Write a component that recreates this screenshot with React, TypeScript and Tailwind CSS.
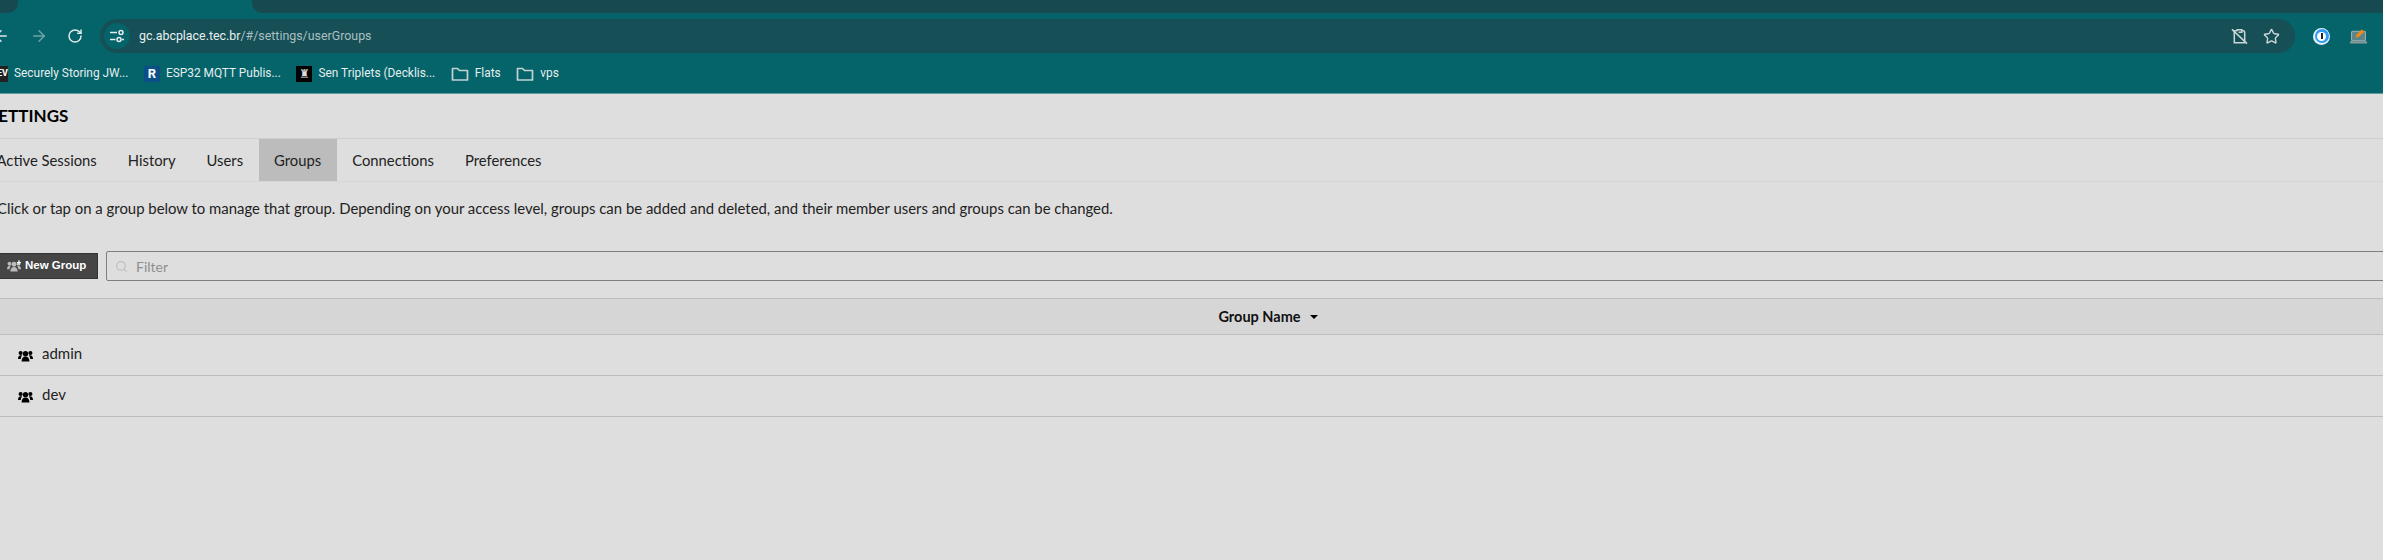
import { ArrowLeft, ArrowRight, RotateCw, Star, Search } from "lucide-react";

function GroupsIcon({ className, plus }: { className?: string; plus?: boolean }) {
  return (
    <svg viewBox="0 0 16 13" className={className} fill="currentColor" aria-hidden="true">
      <circle cx="8" cy="4.500" r="2.800" />
      <circle cx="2.800" cy="3.800" r="2.200" />
      <circle cx="13.200" cy="3.800" r="2.200" />
      <path d="M3.800 12.800c0-3.300 1.600-5.300 4.200-5.300s4.200 2 4.200 5.300z" />
      <path d="M0 10.200c0-2.500 1.200-3.900 3-3.900.6 0 1 .1 1.400.3C3.500 7.600 3 8.800 3 10.200H0zM16 10.200c0-2.500-1.200-3.900-3-3.900-.6 0-1 .1-1.400.3.900 1 1.400 2.200 1.400 3.600H16z" />
      {plus ? <path d="M13 0h1.400v1.800H16v1.300h-1.600V5H13V3.100h-1.700V1.800H13z" fill="#fff" /> : null}
    </svg>
  );
}

function TuneIcon() {
  return (
    <svg viewBox="0 0 16 16" className="w-[16px] h-[16px]" fill="none" stroke="currentColor" strokeWidth="1.500" aria-hidden="true">
      <path d="M1 4.500h7M1 11.500h5.500M13 11.500h2" />
      <circle cx="12" cy="4.500" r="2" />
      <circle cx="10" cy="11.500" r="2" />
    </svg>
  );
}

function ClipboardSlashIcon({ className }: { className?: string }) {
  return (
    <svg viewBox="0 0 18 18" className={className} fill="none" stroke="currentColor" strokeWidth="1.600" aria-hidden="true">
      <path d="M6 3H3.500v12.500h11V4.500a1.500 1.500 0 0 0-1.500-1.500h-1" />
      <path d="M6.500 3.500V1.800h5v2.700H8" />
      <path d="M1 1.500l16 15" />
    </svg>
  );
}

function FolderIcon() {
  return (
    <svg viewBox="0 0 18 16" className="w-[18px] h-[16px] text-[#c3d2d3]" fill="none" stroke="currentColor" strokeWidth="1.700" aria-hidden="true">
      <path d="M1.500 2.500h5l2 2h8v9.500h-15z" strokeLinejoin="round" />
    </svg>
  );
}

const tabs = ["Active Sessions", "History", "Users", "Groups", "Connections", "Preferences"];

function Bookmark({ icon, label }: { icon: React.ReactNode; label: string }) {
  return (
    <div className="flex items-center gap-[6px] text-[11.900px] text-[#e4eeee]">
      {icon}
      <span>{label}</span>
    </div>
  );
}

function BrowserBar() {
  return (
    <div className="bg-[#05636a] h-[94px] border-b border-[#5f9aa0] flex flex-col font-['Roboto',sans-serif]">
      {/* tab strip */}
      <div className="flex h-[13px]">
        <div className="w-[18px] bg-[#174a50] rounded-br-[10px]" />
        <div className="w-[234px]" />
        <div className="flex-1 bg-[#174a50] rounded-bl-[10px]" />
      </div>
      {/* toolbar */}
      <div className="flex items-center h-[34px] mt-[6px]">
        <div className="flex items-center w-[101px] text-[#dfe9ea] -ml-[8px]">
          <ArrowLeft size={18} strokeWidth={2} />
          <ArrowRight size={18} strokeWidth={2} className="ml-[20px] text-[#6fa3a7]" />
          <RotateCw size={16} strokeWidth={2.2} className="ml-[19px]" />
        </div>
        <div className="flex items-center flex-1 h-[34px] ml-[7px] rounded-full bg-[#174f56] pl-[4px] pr-[15px]">
          <div className="flex items-center justify-center w-[26px] h-[26px] rounded-full bg-[#05636a] text-[#e4eeee]">
            <TuneIcon />
          </div>
          <span className="ml-[9px] text-[12.400px] text-[#e8f0f0]">gc.abcplace.tec.br</span>
          <span className="text-[12.400px] text-[#a9c0c2]">/#/settings/userGroups</span>
          <div className="flex-1" />
          <ClipboardSlashIcon className="w-[17px] h-[17px] text-[#c9d6d7]" />
          <Star size={17} strokeWidth={2} className="ml-[15px] text-[#c9d6d7]" />
        </div>
        <div className="flex items-center w-[88px] pl-[18px]">
          <div className="flex items-center justify-center w-[17px] h-[17px] rounded-full bg-[#e8f2fa]">
            <div className="flex items-center justify-center w-[14px] h-[14px] rounded-full bg-[#2f9bf5]">
              <div className="flex items-center justify-center w-[9px] h-[9px] rounded-full bg-white">
                <div className="w-[2px] h-[6px] bg-[#222]" />
              </div>
            </div>
          </div>
          <svg viewBox="0 0 16 16" className="ml-[20px] w-[17px] h-[17px]" aria-hidden="true">
            <rect x="1.500" y="3" width="13" height="9" rx="1" fill="#5d8488" stroke="#9db3b5" />
            <rect x="0" y="12.500" width="16" height="2" rx="0.500" fill="#8a9a9c" />
            <path d="M5 9l1-2.500L11 1.500l2.500 2-5.500 5z" fill="#f28a14" />
          </svg>
        </div>
      </div>
      {/* bookmarks */}
      <div className="flex items-center h-[30px] mt-[6px] -ml-[3px] gap-[15.500px]">
        <Bookmark
          icon={<span className="flex items-center justify-center w-[11px] h-[16px] bg-[#222] text-[9px] font-bold text-white">EV</span>}
          label="Securely Storing JW..."
        />
        <Bookmark
          icon={<span className="flex items-center justify-center w-[16px] h-[16px] bg-[#0b4f88] text-[13px] font-bold text-white">R</span>}
          label="ESP32 MQTT Publis..."
        />
        <Bookmark
          icon={<span className="flex items-center justify-center w-[16px] h-[16px] bg-black text-[12px] text-[#ddd]">♜</span>}
          label="Sen Triplets (Decklis..."
        />
        <Bookmark icon={<FolderIcon />} label="Flats" />
        <Bookmark icon={<FolderIcon />} label="vps" />
      </div>
    </div>
  );
}

export default function App() {
  return (
    <div className="w-[2383px] h-[560px] overflow-hidden bg-[#dedede] font-['Lato',sans-serif] text-[#111]">
      <BrowserBar />

      {/* Page title */}
      <div className="h-[45px] flex items-center border-b border-[#cfcfcf] -ml-[11px]">
        <h1 className="text-[17px] font-bold text-black">SETTINGS</h1>
      </div>

      {/* Section tabs */}
      <div className="flex h-[43px] border-b border-[#d6d6d6] -ml-[19px]">
        {tabs.map((tab) => (
          <div
            key={tab}
            className={`flex items-center px-[15.500px] text-[14.800px] text-[#222] ${tab === "Groups" ? "bg-[#bcbcbc]" : ""}`}
          >
            {tab}
          </div>
        ))}
      </div>

      <p className="mt-[16px] -ml-[3px] text-[14.900px] leading-[20px] text-[#222]">
        Click or tap on a group below to manage that group. Depending on your access level, groups can be added and deleted, and their member users and groups can be changed.
      </p>

      {/* Toolbar */}
      <div className="flex items-center mt-[33px] -ml-[4px] h-[30px]">
        <button className="flex items-center h-[26px] w-[102px] pl-[10px] bg-[#454545] border border-[#333] text-white text-[11.500px] font-bold font-['Liberation_Sans',sans-serif]">
          <GroupsIcon plus className="w-[14px] h-[12px] text-[#bbb] mr-[4px]" />
          New Group
        </button>
        <div className="flex items-center flex-1 h-[30px] ml-[8px] -mr-[155px] border border-[#7f7f7f] rounded-[2px] pl-[8px]">
          <Search size={13} className="text-[#bdbdbd]" />
          <span className="ml-[8px] text-[14px] text-[#8f8f8f]">Filter</span>
        </div>
      </div>

      {/* Group table */}
      <div className="mt-[17px] -ml-[2px] -mr-[155px]">
        <div className="flex items-center justify-center h-[37px] bg-[#d6d6d6] border-y border-[#bdbdbd] text-[14.500px] font-bold text-[#111]">
          Group Name
          <span className="ml-[9px] mt-[1px] border-x-[4px] border-x-transparent border-t-[4px] border-t-black" />
        </div>
        {["admin", "dev"].map((name) => (
          <div key={name} className="flex items-center h-[41px] border-b border-[#bdbdbd] pl-[20px] text-[15px] text-[#222]">
            <GroupsIcon className="w-[15px] h-[13px] text-black mr-[9px]" />
            <span className="mb-[3px]">{name}</span>
          </div>
        ))}
      </div>
    </div>
  );
}
